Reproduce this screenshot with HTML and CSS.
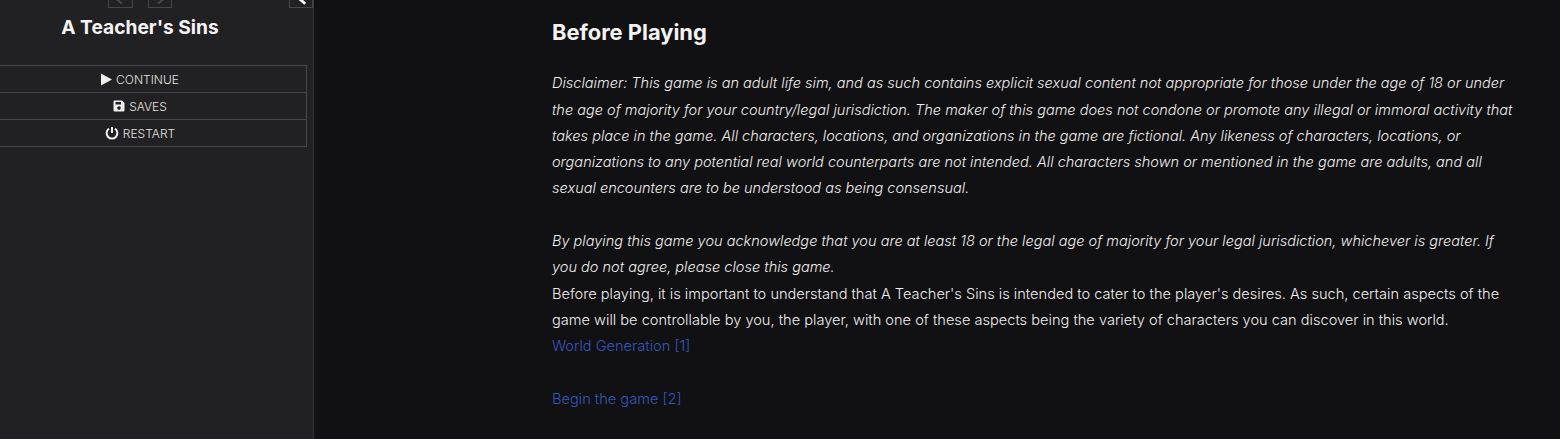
FILE: index.html
```html
<!DOCTYPE html>
<html lang="en">
<head>
<meta charset="utf-8">
<title>A Teacher's Sins</title>
<link rel="stylesheet" href="styles.css">
</head>
<body>
<div class="app">
  <aside class="sidebar">
    <div class="toolbar">
      <div class="history">
        <button class="tool-btn"><svg viewBox="0 0 10 10" class="tool-icon"><path d="M6.500 1 3 4 6.500 7" /></svg></button>
        <button class="tool-btn"><svg viewBox="0 0 10 10" class="tool-icon"><path d="M3.500 1 7 4 3.500 7" /></svg></button>
      </div>
      <button class="tool-btn tool-toggle"><svg viewBox="0 0 10 10" class="tool-icon tool-icon-bright"><path d="M8 0 4 3.500 8 7" /></svg></button>
    </div>
    <h1 class="story-title">A Teacher's Sins</h1>
    <nav class="menu">
      <a class="menu-item"><svg class="mi" viewBox="0 0 12 14"><path d="M0 0.500 12 7 0 13.500Z"/></svg>CONTINUE</a>
      <a class="menu-item"><svg class="mi mi-save" viewBox="0 0 12 12"><path fill-rule="evenodd" d="M1.300 .5H9L11.500 3V10.200A1.300 1.300 0 0 1 10.200 11.500H1.800A1.300 1.300 0 0 1 .5 10.200V1.800A1.300 1.300 0 0 1 1.300 .5ZM2.500 2V4.500H8V2ZM6 6.300A1.800 1.800 0 1 0 6 9.900A1.800 1.800 0 1 0 6 6.300Z"/></svg>SAVES</a>
      <a class="menu-item"><svg class="mi mi-power" viewBox="0 0 14 14"><path class="pw" d="M4 2.700A5.400 5.400 0 1 0 10 2.700M7 .9V7"/></svg>RESTART</a>
    </nav>
  </aside>
  <main class="story">
    <article class="passage">
      <h2 class="passage-title">Before Playing</h2>
      <p class="text"><em class="aside">Disclaimer: This game is an adult life sim, and as such contains explicit sexual content not appropriate for those under the age of 18 or under the age of majority for your country/legal jurisdiction. The maker of this game does not condone or promote any illegal or immoral activity that takes place in the game. All characters, locations, and organizations in the game are fictional. Any likeness of characters, locations, or organizations to any potential real world counterparts are not intended. All characters shown or mentioned in the game are adults, and all sexual encounters are to be understood as being consensual.</em></p>
      <p class="text spaced"><em class="aside">By playing this game you acknowledge that you are at least 18 or the legal age of majority for your legal jurisdiction, whichever is greater. If you do not agree, please close this game.</em></p>
      <p class="text">Before playing, it is important to understand that A Teacher's Sins is intended to cater to the player's desires. As such, certain aspects of the game will be controllable by you, the player, with one of these aspects being the variety of characters you can discover in this world.</p>
      <p class="text"><a class="link">World Generation [1]</a></p>
      <p class="text spaced"><a class="link">Begin the game [2]</a></p>
    </article>
  </main>
</div>
</body>
</html>
```
FILE: styles.css
```css
* { box-sizing: border-box; }
html, body { margin: 0; height: 100%; overflow: hidden; }
body { background: #111013; color: #f0eeeb; font-family: Inter, "Noto Sans", sans-serif; font-size: 14.600px; font-weight: 300; }
.app { display: flex; height: 439px; }
.sidebar { width: 314px; flex: none; background: #212023; border-right: 1px solid #37363a; display: flex; flex-direction: column; overflow: hidden; padding-right: 6px; }
.toolbar { display: flex; justify-content: space-between; height: 25px; margin-top: -17px; margin-right: -6px; padding-left: 108px; }
.history { display: flex; gap: 15px; }
.tool-btn { width: 24.500px; height: 25px; padding: 0; background: #212023; border: 1px solid #47464a; display: block; }
.tool-icon { width: 14px; height: 14px; display: block; margin: 10px auto 0; fill: none; stroke: #47464a; stroke-width: 1.5; }
.tool-icon-bright { stroke: #fff; stroke-width: 2; }
.story-title { margin: 8px 0 0; font-size: 19.200px; line-height: 23px; font-weight: 700; text-align: center; color: #f4f3f1; width: 280px; }
.menu { margin: 26px 0 0 -27px; border: 1px solid #47464a; display: flex; flex-direction: column; }
.menu-item { height: 27px; display: flex; align-items: center; justify-content: center; gap: 4px; font-size: 12px; color: #e4e2df; border-top: 1px solid #47464a; }
.menu-item:first-child { height: 26px; border-top: 0; }
.mi { width: 11px; height: 13px; fill: #f0eeeb; flex: none; }
.mi-save { width: 12px; height: 12px; }
.mi-power { width: 14px; height: 14px; }
.pw { fill: none; stroke: #f0eeeb; stroke-width: 2; }
.story { flex: 1; min-width: 0; padding: 0 0 0 238px; }
.passage { width: 963px; }
.passage-title { margin: 19px 0 25.300px; font-size: 21.900px; line-height: 26px; font-weight: 700; color: #f4f3f1; }
.text { margin: 0; line-height: 26.300px; color: #f0eeeb; }
.aside { font-size: 14.540px; }
.spaced { margin-top: 26.300px; }
.link { color: #3558bd; }
```
